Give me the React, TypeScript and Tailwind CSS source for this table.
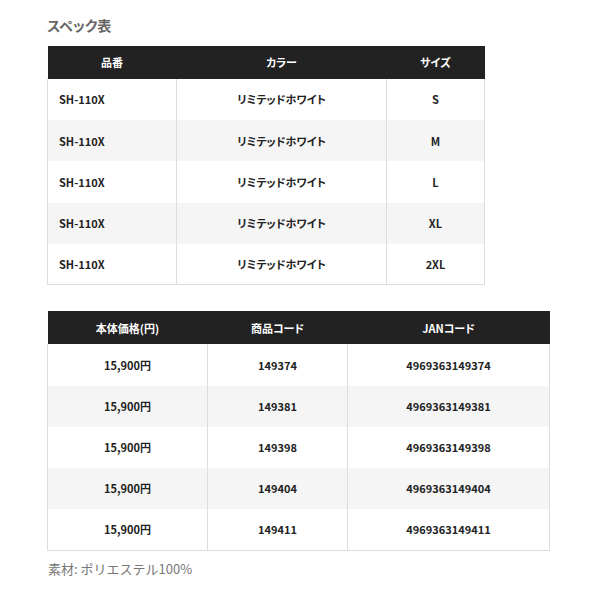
import React from "react"

const font = { fontFamily: '"Noto Sans CJK JP", "Noto Sans", sans-serif' }

const sizeRows = [
  { code: "SH-110X", color: "リミテッドホワイト", size: "S" },
  { code: "SH-110X", color: "リミテッドホワイト", size: "M" },
  { code: "SH-110X", color: "リミテッドホワイト", size: "L" },
  { code: "SH-110X", color: "リミテッドホワイト", size: "XL" },
  { code: "SH-110X", color: "リミテッドホワイト", size: "2XL" },
]

const priceRows = [
  { price: "15,900円", item: "149374", jan: "4969363149374" },
  { price: "15,900円", item: "149381", jan: "4969363149381" },
  { price: "15,900円", item: "149398", jan: "4969363149398" },
  { price: "15,900円", item: "149404", jan: "4969363149404" },
  { price: "15,900円", item: "149411", jan: "4969363149411" },
]

const th = "h-[33px] p-0 text-[11px] font-bold text-white text-center"
const td = "h-[41.2px] p-0 text-[11px] font-bold text-[#222] border-x border-[#ddd]"

export default function App() {
  return (
    <div className="bg-white w-[600px] h-[600px] pl-[47px] pt-[15px] [font-feature-settings:'palt']" style={font}>
      {/* Title */}
      <h2 className="text-[14px] font-bold text-[#666] leading-[20px] mb-[11px]">スペック表</h2>

      {/* Spec table */}
      <table className="w-[437px] border-collapse table-fixed">
        <colgroup>
          <col className="w-[129px]" />
          <col className="w-[210px]" />
          <col className="w-[98px]" />
        </colgroup>
        <thead>
          <tr className="bg-[#222]">
            <th className={th}>品番</th>
            <th className={th}>カラー</th>
            <th className={th}>サイズ</th>
          </tr>
        </thead>
        <tbody>
          {sizeRows.map((r, i) => (
            <tr key={i} className="even:bg-[#f5f5f5] last:border-b last:border-[#ddd]">
              <td className={`${td} text-left pl-[11px]`}>{r.code}</td>
              <td className={`${td} text-center`}>{r.color}</td>
              <td className={`${td} text-center`}>{r.size}</td>
            </tr>
          ))}
        </tbody>
      </table>

      {/* Price table */}
      <table className="w-[502px] border-collapse table-fixed mt-[26px]">
        <colgroup>
          <col className="w-[160px]" />
          <col className="w-[140px]" />
          <col className="w-[202px]" />
        </colgroup>
        <thead>
          <tr className="bg-[#222]">
            <th className={th}>本体価格(円)</th>
            <th className={th}>商品コード</th>
            <th className={th}>JANコード</th>
          </tr>
        </thead>
        <tbody>
          {priceRows.map((r, i) => (
            <tr key={i} className="even:bg-[#f5f5f5] last:border-b last:border-[#ddd]">
              <td className={`${td} text-center`}>{r.price}</td>
              <td className={`${td} text-center`}>{r.item}</td>
              <td className={`${td} text-center`}>{r.jan}</td>
            </tr>
          ))}
        </tbody>
      </table>

      <p className="text-[13px] text-[#777] leading-[20px] mt-[8px] pl-px [font-feature-settings:normal]">素材: ポリエステル100%</p>
    </div>
  )
}
